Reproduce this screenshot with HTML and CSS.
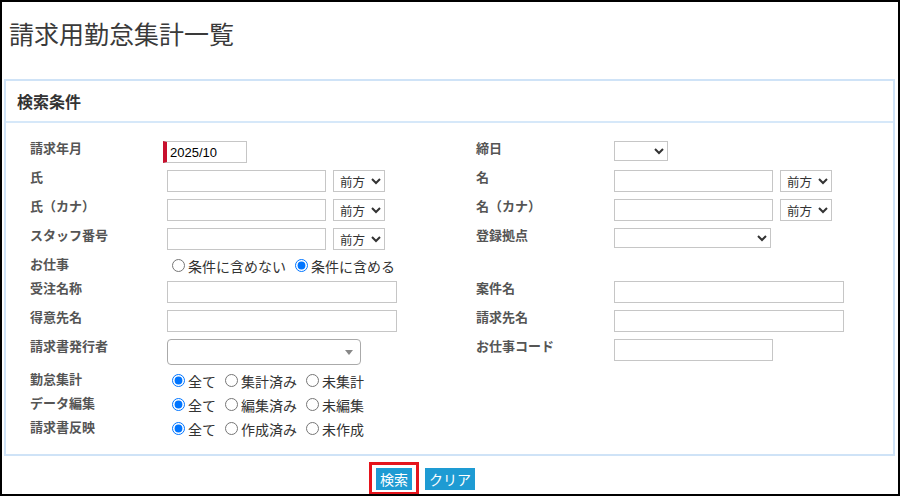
FILE: index.html
```html
<!DOCTYPE html>
<html lang="ja">
<head>
    <meta charset="UTF-8">
    <meta name="viewport" content="width=device-width, initial-scale=1.0">
    <title>請求用勤怠集計一覧</title>
    <link rel="stylesheet" href="styles.css">
</head>
<body>
<div class="frame">
    <h1 class="page-title">請求用勤怠集計一覧</h1>

    <div class="panel">
        <div class="panel-head">検索条件</div>
        <div class="search-form">
            <div class="lbl">請求年月</div>
            <div class="fld"><input class="txt w-ym req" type="text" value="2025/10"></div>
            <div class="lbl">締日</div>
            <div class="fld"><select class="sel short w-day"><option></option></select></div>

            <div class="lbl">氏</div>
            <div class="fld"><input class="txt w-name" type="text"><select class="sel w-match"><option>前方</option></select></div>
            <div class="lbl">名</div>
            <div class="fld"><input class="txt w-name" type="text"><select class="sel w-match"><option>前方</option></select></div>

            <div class="lbl">氏（カナ）</div>
            <div class="fld"><input class="txt w-name" type="text"><select class="sel w-match"><option>前方</option></select></div>
            <div class="lbl">名（カナ）</div>
            <div class="fld"><input class="txt w-name" type="text"><select class="sel w-match"><option>前方</option></select></div>

            <div class="lbl">スタッフ番号</div>
            <div class="fld"><input class="txt w-name" type="text"><select class="sel w-match"><option>前方</option></select></div>
            <div class="lbl">登録拠点</div>
            <div class="fld"><select class="sel short w-base"><option></option></select></div>

            <div class="lbl">お仕事</div>
            <div class="radios">
                <label><input type="radio" name="job">条件に含めない</label>
                <label><input type="radio" name="job" checked>条件に含める</label>
            </div>

            <div class="lbl">受注名称</div>
            <div class="fld"><input class="txt w-long" type="text"></div>
            <div class="lbl">案件名</div>
            <div class="fld"><input class="txt w-long" type="text"></div>

            <div class="lbl">得意先名</div>
            <div class="fld"><input class="txt w-long" type="text"></div>
            <div class="lbl">請求先名</div>
            <div class="fld"><input class="txt w-long" type="text"></div>

            <div class="lbl">請求書発行者</div>
            <div class="fld"><div class="combo"><span class="combo-arrow"></span></div></div>
            <div class="lbl">お仕事コード</div>
            <div class="fld"><input class="txt w-name" type="text"></div>

            <div class="lbl">勤怠集計</div>
            <div class="radios">
                <label><input type="radio" name="att" checked>全て</label>
                <label><input type="radio" name="att">集計済み</label>
                <label><input type="radio" name="att">未集計</label>
            </div>

            <div class="lbl">データ編集</div>
            <div class="radios">
                <label><input type="radio" name="edit" checked>全て</label>
                <label><input type="radio" name="edit">編集済み</label>
                <label><input type="radio" name="edit">未編集</label>
            </div>

            <div class="lbl">請求書反映</div>
            <div class="radios">
                <label><input type="radio" name="inv" checked>全て</label>
                <label><input type="radio" name="inv">作成済み</label>
                <label><input type="radio" name="inv">未作成</label>
            </div>
        </div>
    </div>

    <div class="actions">
        <span class="focus-ring"><button class="btn">検索</button></span>
        <button class="btn">クリア</button>
    </div>
</div>
</body>
</html>
```

FILE: styles.css
```css
body {
    margin: 0;
    font-family: "Noto Sans CJK JP", sans-serif;
    color: #333;
    background: #fff;
}
.frame {
    width: 900px;
    height: 496px;
    box-sizing: border-box;
    border: 2px solid #000;
    overflow: hidden;
}
.page-title {
    margin: 0 0 28px;
    padding: 13px 0 0 7px;
    font-size: 25px;
    font-weight: normal;
    line-height: 36px;
    color: #3a3a3a;
}
.panel {
    margin: 0 3px 0 2px;
    border: 2px solid #cfe3f7;
}
.panel-head {
    height: 40px;
    line-height: 40px;
    padding-left: 11px;
    font-size: 16px;
    font-weight: bold;
    color: #333;
    border-bottom: 2px solid #d6e8f9;
}
.search-form {
    display: grid;
    grid-template-columns: 137px 309px 138px 1fr;
    row-gap: 7px;
    padding: 18px 0 17px 24px;
}
.lbl {
    font-size: 13px;
    font-weight: bold;
    line-height: 14px;
    color: #555;
}
.fld {
    display: flex;
    align-items: flex-start;
    gap: 7px;
}
.txt {
    height: 22px;
    box-sizing: border-box;
    border: 1px solid #c6c6c6;
    border-radius: 0;
    padding: 0 3px;
    font: 13px "Liberation Sans", sans-serif;
    color: #000;
    background: #fff;
}
.req {
    margin-left: -4px;
    border-left: 4px solid #c8102e;
}
.w-ym { width: 84px; }
.w-name { width: 159px; }
.w-long { width: 230px; }
.sel {
    height: 22px;
    box-sizing: border-box;
    border: 1px solid #c6c6c6;
    border-radius: 0;
    padding: 0 0 0 2px;
    font-family: "Noto Sans CJK JP", sans-serif;
    font-size: 12.5px;
    color: #333;
    background: #fff;
}
.sel.short { height: 20px; }
.w-match { width: 52px; }
.w-day { width: 54px; }
.w-base { width: 157px; }
.combo {
    width: 194px;
    height: 26px;
    box-sizing: border-box;
    border: 1px solid #aaa;
    border-radius: 4px;
    display: flex;
    justify-content: flex-end;
    align-items: center;
    padding-right: 7px;
}
.combo-arrow {
    width: 0;
    height: 0;
    border-style: solid;
    border-width: 5px 4px 0 4px;
    border-color: #888 transparent transparent transparent;
}
.radios {
    grid-column: 2 / span 3;
    display: flex;
    align-items: center;
    height: 17px;
    font-size: 14px;
    color: #333;
}
.radios label {
    display: inline-flex;
    align-items: center;
    margin-right: 4px;
}
.radios input {
    width: 13px;
    height: 13px;
    margin: 0 3px 0 5px;
}
.actions {
    display: flex;
    align-items: center;
    gap: 6px;
    padding: 6px 0 0 367px;
}
.focus-ring {
    display: flex;
    border: 3px solid #e5141c;
    padding: 3px 4px 2px;
}
.btn {
    height: 22px;
    border: 0;
    padding: 0 4px;
    background: #1e9bd3;
    color: #fff;
    font-family: "Noto Sans CJK JP", sans-serif;
    font-size: 14px;
    line-height: 22px;
    cursor: pointer;
}
```
